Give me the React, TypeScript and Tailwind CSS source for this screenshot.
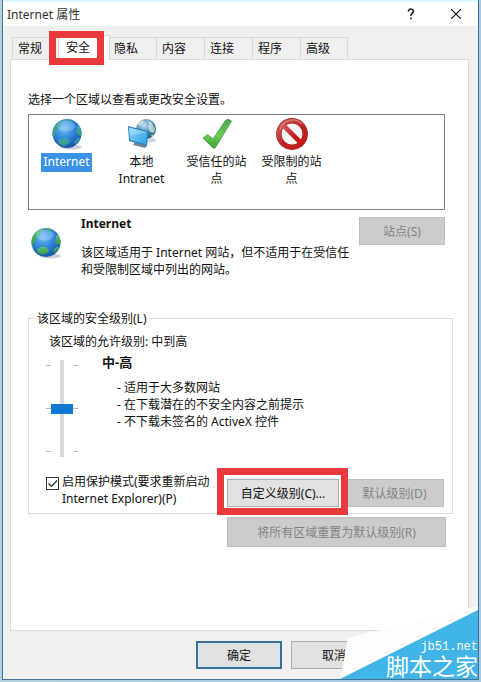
import React, { useState } from 'react';

const tabs = ['常规', '安全', '隐私', '内容', '连接', '程序', '高级'];

const Globe = ({ id, land, className }: { id: string; land: [string, string]; className: string }) => (
  <svg viewBox="0 0 32 32" className={className} aria-hidden="true">
    <defs>
      <radialGradient id={`${id}-sea`} cx="40%" cy="32%" r="70%">
        <stop offset="0" stopColor="#74c0f2" />
        <stop offset="0.5" stopColor="#3088dc" />
        <stop offset="1" stopColor="#174fa8" />
      </radialGradient>
      <linearGradient id={`${id}-land`} x1="0" y1="0" x2="0" y2="1">
        <stop offset="0" stopColor={land[0]} />
        <stop offset="1" stopColor={land[1]} />
      </linearGradient>
      <clipPath id={`${id}-clip`}>
        <circle cx="16" cy="15.5" r="14.5" />
      </clipPath>
    </defs>
    <ellipse cx="20" cy="29" rx="11" ry="2.5" fill="#8f9aa3" opacity="0.45" />
    <circle cx="16" cy="15.5" r="14.5" fill={`url(#${id}-sea)`} />
    <g clipPath={`url(#${id}-clip)`} fill={`url(#${id}-land)`}>
      <path d="M1 14C2 8 5 4 10 2l3 1-1 2-3 1 1 2-3 2-1 3-2 2-1 4-2-1z" />
      <path d="M14 0l6 1 1 3-2 1-2-2-3 0z" opacity="0.8" />
      <path d="M26 8l3 1 3 6-2 3-3-1-2-3 1-3z" />
      <path d="M7 22l4-2 5 0 3 3-2 3-4 2-5-2z" />
      <path d="M24 22l4-3 1 3-4 4-2-1z" opacity="0.8" />
    </g>
    <ellipse cx="15" cy="8" rx="9" ry="5.5" fill="#d9f1ff" opacity="0.25" />
  </svg>
);

const IntranetIcon = () => (
  <svg viewBox="0 0 32 32" className="h-8 w-8" aria-hidden="true">
    <defs>
      <radialGradient id="net-sea" cx="40%" cy="30%" r="70%">
        <stop offset="0" stopColor="#c6dfed" />
        <stop offset="0.6" stopColor="#4386b2" />
        <stop offset="1" stopColor="#205a86" />
      </radialGradient>
      <linearGradient id="net-screen" x1="0" y1="0" x2="1" y2="1">
        <stop offset="0" stopColor="#8bd6fb" />
        <stop offset="1" stopColor="#2a9fe2" />
      </linearGradient>
    </defs>
    <ellipse cx="24" cy="22" rx="6" ry="2.5" fill="#7e9aac" opacity="0.4" />
    <circle cx="20" cy="11" r="10" fill="url(#net-sea)" />
    <path d="M12 4l4-2 2 2-3 3-3 1zM22 2l4 3 3 6-1 4-4-1-2-5 1-3zM25 17l3-1-2 3z" fill="#d6ead9" opacity="0.75" />
    <path d="M9 24l8 2 4 2-2 2-12-3z" fill="#6f8796" />
    <path d="M2 8l20 5-1 15L3 23z" fill="#2a7db8" />
    <path d="M3 9.500l18 4.500-1 12.500L4 22z" fill="url(#net-screen)" />
    <path d="M3 9.500l18 4.500L4 18z" fill="#c5ecff" opacity="0.35" />
  </svg>
);

const TrustedIcon = () => (
  <svg viewBox="0 0 32 32" className="h-8 w-8" aria-hidden="true">
    <defs>
      <linearGradient id="tick" x1="0" y1="0" x2="0" y2="1">
        <stop offset="0" stopColor="#4fa94a" />
        <stop offset="0.55" stopColor="#6ccb55" />
        <stop offset="1" stopColor="#3aa338" />
      </linearGradient>
    </defs>
    <path d="M2 20L6.500 16.500l5.500 4.500L24.500 2.500q3-2.500 6 .5L14.500 29.500q-1.500 1.500-3 0z" fill="url(#tick)" stroke="#3d9a3b" strokeWidth="0.8" strokeLinejoin="round" />
  </svg>
);

const RestrictedIcon = () => (
  <svg viewBox="0 0 32 32" className="h-8 w-8" aria-hidden="true">
    <defs>
      <linearGradient id="ban" x1="0" y1="0" x2="1" y2="1">
        <stop offset="0" stopColor="#d4605c" />
        <stop offset="0.5" stopColor="#bd2629" />
        <stop offset="1" stopColor="#cc1212" />
      </linearGradient>
    </defs>
    <circle cx="16" cy="16" r="13.2" fill="#f7f7f7" stroke="#a0282b" strokeWidth="5.400" />
    <circle cx="16" cy="16" r="13.2" fill="none" stroke="url(#ban)" strokeWidth="4.200" />
    <path d="M7.500 7.500l17 17" stroke="url(#ban)" strokeWidth="4.600" />
    <path d="M4 12a13 13 0 0 1 22-6" fill="none" stroke="#f3a5a0" strokeWidth="1.200" opacity="0.6" />
  </svg>
);

const zones = [
  { name: 'Internet', icon: <Globe id="zone" land={['#3f9fae', '#3a9f86']} className="h-8 w-8" /> },
  { name: '本地 Intranet', icon: <IntranetIcon /> },
  { name: '受信任的站点', icon: <TrustedIcon /> },
  { name: '受限制的站点', icon: <RestrictedIcon /> },
];

const Ticks = () => (
  <div className="flex h-[97px] flex-col justify-between py-[5px]" aria-hidden="true">
    <span className="h-px w-[5px] bg-[#b5b5b5]" />
    <span className="h-px w-[5px] bg-[#b5b5b5]" />
    <span className="h-px w-[5px] bg-[#b5b5b5]" />
  </div>
);

const disabledButton = 'border border-[#bfbfbf] bg-[#cccccc] text-[#838383]';

const App = () => {
  const [zone, setZone] = useState('Internet');
  const [level, setLevel] = useState(50);
  const [protectedMode, setProtectedMode] = useState(true);

  return (
    <div className="relative flex min-h-screen flex-col overflow-hidden bg-linear-to-r from-[#b4d2de] to-[#a5c8e6] px-[2px] pb-[2px] font-['Noto_Sans','Noto_Sans_CJK_SC',sans-serif] text-[12px] leading-[17px] text-[#111111]">
      <main className="flex grow flex-col border-x border-b border-[#447393] bg-[#f0f0f0]">
        <header className="flex h-[26px] items-center border-t-2 border-[#d9f8fc] bg-white pl-1">
          <h1 className="text-[#333333]">Internet 属性</h1>
          <button aria-label="帮助" className="ml-auto flex h-6 w-[45px] items-center justify-center">
            <svg viewBox="0 0 8 12" className="h-3 w-2" fill="none" stroke="#111111" strokeWidth="1.500">
              <path d="M1.500 3.500V2.800Q2 1 4 1t2.500 2Q6.500 4.200 5 5.300T4 8M4 9.600v1.600" />
            </svg>
          </button>
          <button aria-label="关闭" className="flex h-6 w-[45px] items-center justify-center">
            <svg viewBox="0 0 10 10" className="h-[10px] w-[10px]" stroke="#111111" strokeWidth="1.200">
              <path d="M0 0l10 10M10 0L0 10" />
            </svg>
          </button>
        </header>

        <div className="flex grow flex-col border-l-4 border-[#e9f2f6] pt-[9px] pr-[9px] pl-[3px]">
          <nav className="flex items-end pl-[2px]" role="tablist">
            {tabs.map((tab) =>
              tab === '安全' ? (
                <button key={tab} role="tab" aria-selected="true" className="relative z-10 -mx-[2px] -mb-px h-[25px] w-[52px] border-x border-t border-[#d9d9d9] bg-white pb-[2px] pl-[7px] text-left">
                  {tab}
                  <span className="pointer-events-none absolute -top-[5px] -left-[10px] h-[34px] w-[55px] border-[7px] border-[#e83a3c]" />
                </button>
              ) : (
                <button key={tab} role="tab" aria-selected="false" className="h-[22px] w-12 border-t border-l border-[#d9d9d9] bg-[#f0f0f0] pl-[5px] text-left last:border-r">
                  {tab}
                </button>
              )
            )}
          </nav>

          <section className="grow border border-[#dcdcdc] bg-white pt-[31px] pr-[15px] pl-[17px]">
            <p>选择一个区域以查看或更改安全设置。</p>
            <div className="mt-[6px] mr-2 flex min-h-24 items-start border border-[#828282] pt-[3px]">
              {zones.map((item) => (
                <button key={item.name} onClick={() => setZone(item.name)} className="flex w-[75px] flex-col items-center gap-[3px] px-1">
                  {item.icon}
                  <span className={zone === item.name ? 'bg-[#3a93e6] px-[2px] pb-[2px] text-white' : 'px-[2px]'}>{item.name}</span>
                </button>
              ))}
            </div>

            <div className="mt-[5px] mr-2 flex items-start">
              <Globe id="info" land={['#5fbf7c', '#2f9a3c']} className="mt-[12px] ml-[2px] h-8 w-8 shrink-0" />
              <div className="ml-[19px]">
                <h2 className="font-bold">Internet</h2>
                <p className="mt-3 whitespace-nowrap">
                  该区域适用于 Internet 网站，但不适用于在受信任
                  <br />
                  和受限制区域中列出的网站。
                </p>
              </div>
              <div className="flex w-0 grow justify-end">
                <button disabled className={`mt-[2px] h-7 w-[86px] shrink-0 ${disabledButton}`}>站点(S)</button>
              </div>
            </div>

            <fieldset className="mt-8 min-w-0 border border-[#dcdcdc] pb-[6px] pl-[17px]">
              <legend className="-ml-[11px] px-[2px]">该区域的安全级别(L)</legend>
              <p className="mt-[6px] ml-[3px]">该区域的允许级别: 中到高</p>
              <div className="mt-1 flex gap-6">
                <div className="mt-[6px] flex">
                  <Ticks />
                  <input
                    type="range"
                    aria-label="该区域的安全级别"
                    value={level}
                    onChange={(e) => setLevel(Number(e.target.value))}
                    className="h-[97px] w-[22px] appearance-none bg-[linear-gradient(#d8d8d8,#d8d8d8)] bg-[length:4px_100%] bg-center bg-no-repeat [direction:rtl] [writing-mode:vertical-lr] [&::-webkit-slider-thumb]:h-[10px] [&::-webkit-slider-thumb]:w-[22px] [&::-webkit-slider-thumb]:appearance-none [&::-webkit-slider-thumb]:bg-[#0f78d4]"
                  />
                  <Ticks />
                </div>
                <div>
                  <h3 className="text-[13px] font-bold">中-高</h3>
                  <ul className="mt-2 ml-[15px]">
                    <li>- 适用于大多数网站</li>
                    <li>- 在下载潜在的不安全内容之前提示</li>
                    <li>- 不下载未签名的 ActiveX 控件</li>
                  </ul>
                </div>
              </div>
              <div className="mt-4 flex items-start pr-2">
                <span className="relative mt-1 h-[13px] w-[13px] shrink-0">
                  <input
                    id="protected"
                    type="checkbox"
                    checked={protectedMode}
                    onChange={(e) => setProtectedMode(e.target.checked)}
                    className="block h-[13px] w-[13px] appearance-none border border-[#333333] bg-white"
                  />
                  {protectedMode && (
                    <svg viewBox="0 0 13 13" className="pointer-events-none absolute inset-0" fill="none" stroke="#222222" strokeWidth="1.200">
                      <path d="M2.500 6.500l3 3 5.500-6" />
                    </svg>
                  )}
                </span>
                <label htmlFor="protected" className="ml-[3px] whitespace-nowrap">
                  启用保护模式(要求重新启动
                  <br />
                  Internet Explorer)(P)
                </label>
                <div className="mt-[6px] flex w-0 grow justify-end gap-[6px]">
                  <button className="relative h-7 w-28 shrink-0 border border-[#adadad] bg-[#e1e1e1]">
                    自定义级别(C)...
                    <span className="pointer-events-none absolute -top-[12px] -left-[11px] z-10 h-[47px] w-[131px] border-[7px] border-[#e83a3c]" />
                    <span className="pointer-events-none absolute -top-[5px] -right-[6px] h-[33px] w-[5px] bg-white" />
                  </button>
                  <button disabled className={`h-7 w-[99px] shrink-0 ${disabledButton}`}>默认级别(D)</button>
                </div>
              </div>
            </fieldset>
            <div className="mt-[3px] mr-[7px] flex justify-end">
              <button disabled className={`h-[30px] w-[219px] ${disabledButton}`}>将所有区域重置为默认级别(R)</button>
            </div>
          </section>
        </div>

        <footer className="flex justify-end gap-[9px] border-l-4 border-[#e9f2f6] pt-[10px] pr-[101px] pb-[10px]">
          <button className="h-7 w-[86px] border-2 border-[#39709a] bg-[#e1e1e1] shadow-[inset_0_0_0_1px_#cdeaf8]">确定</button>
          <button className="h-7 w-[86px] border border-[#adadad] bg-[#e1e1e1]">取消</button>
        </footer>
      </main>

      <aside className="pointer-events-none absolute right-0 bottom-0 h-[76px] w-[141px] text-right text-white">
        <svg viewBox="0 0 141 76" className="absolute inset-0 h-full w-full" aria-hidden="true">
          <path d="M0 73L8 32 128 2 138 0V5z" fill="#fdfdfd" />
          <path d="M0 73L138 4V73z" fill="#41b5e8" />
        </svg>
        <div className="relative flex flex-col pt-[34px] pr-[3px]">
          <p className="font-['Liberation_Mono',monospace] text-[12px] leading-[14px]">jb51.net</p>
          <p className="font-['Liberation_Sans','Noto_Sans_CJK_SC',sans-serif] text-[23px] leading-[26px] whitespace-nowrap">脚本之家</p>
        </div>
      </aside>
    </div>
  );
};

export default App;
